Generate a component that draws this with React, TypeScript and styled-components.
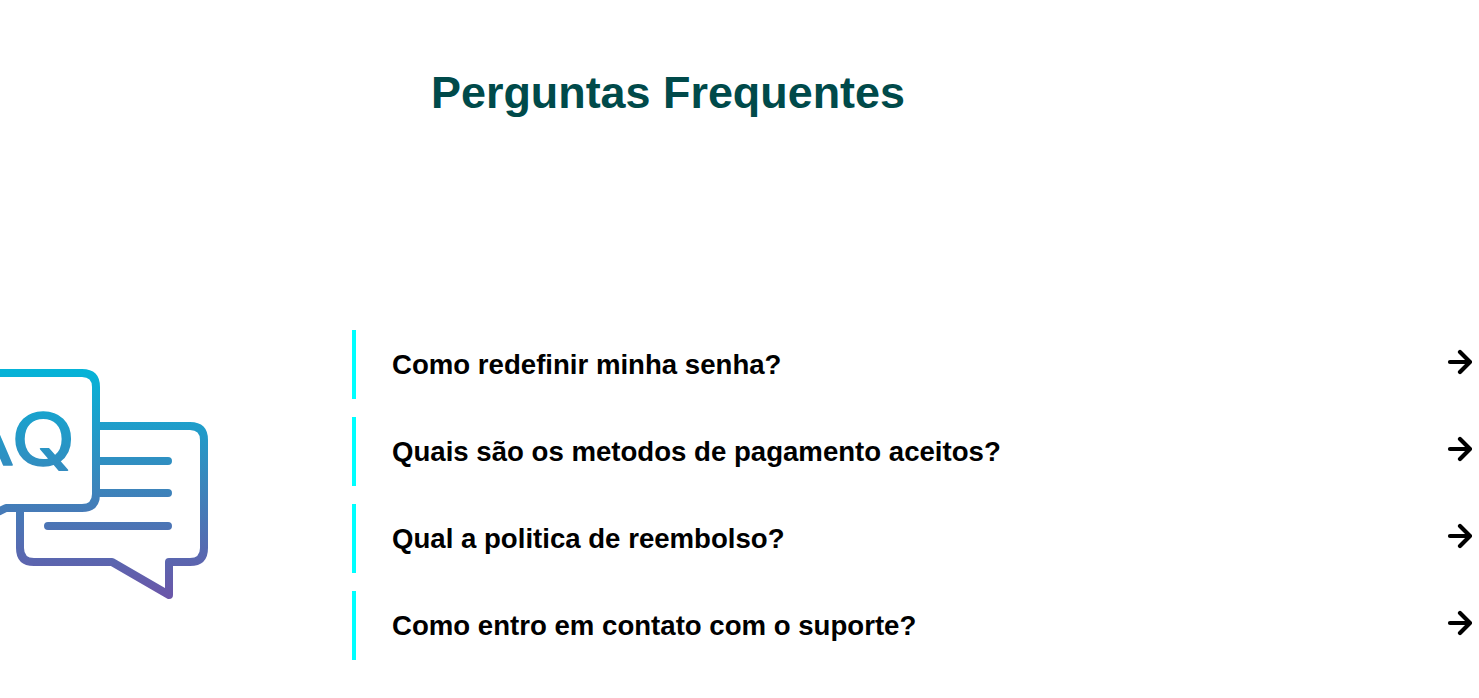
import React from 'react'
import styled, { createGlobalStyle } from 'styled-components'

const GlobalStyle = createGlobalStyle`
  html, body {
    margin: 0;
    background: #fff;
    font-family: "Liberation Sans", Arial, sans-serif;
  }
`

const Page = styled.main`
  width: 100%;
  height: 698px;
  overflow: hidden;
`

const Title = styled.h1`
  margin: 0 0 0 431px;
  padding-top: 67px;
  height: 330px;
  box-sizing: border-box;
  font-size: 44.9px;
  line-height: 52px;
  font-weight: 700;
  color: #004a4a;
`

const FaqSection = styled.section`
  display: flex;
  align-items: flex-start;
`

const Illustration = styled.div`
  flex: 0 0 352px;
  padding-top: 38px;
  line-height: 0;
`

const Questions = styled.ul`
  flex: 1;
  list-style: none;
  margin: 0;
  padding: 0;
  display: flex;
  flex-direction: column;
  gap: 18px;
`

const Question = styled.li`
  height: 69px;
  box-sizing: border-box;
  border-left: 4px solid #00ffff;
  padding: 0 7px 0 36px;
  display: flex;
  align-items: center;
  justify-content: space-between;
  color: #000;
  font-size: 27.6px;
  font-weight: 700;
`

const Arrow = styled.svg`
  flex: none;
  width: 26px;
  height: 26px;
  margin-bottom: 5px;
`

const ArrowIcon = () => (
  <Arrow viewBox="0 0 26 26" fill="none" stroke="#000" strokeWidth="4.2" strokeLinecap="round" strokeLinejoin="round">
    <path d="M4 13H23.5M14 3L24 13L14 23" />
  </Arrow>
)

const FaqIcon = () => (
  <svg width="210" height="240" viewBox="0 368 210 240" fill="none">
    <defs>
      <linearGradient id="faqGrad" gradientUnits="userSpaceOnUse" x1="0" y1="368" x2="0" y2="600">
        <stop offset="0" stopColor="#04b4d8" />
        <stop offset="0.5" stopColor="#3a86bc" />
        <stop offset="1" stopColor="#6c55a8" />
      </linearGradient>
    </defs>
    <g stroke="url(#faqGrad)" strokeWidth="8" strokeLinecap="round" strokeLinejoin="round">
      <path d="M0 373H82Q96 373 96 387V494Q96 508 82 508H6L0 511" />
      <path d="M100 426H190Q204 426 204 440V548Q204 562 190 562H169V595L112 562H34Q20 562 20 548V510" />
      <path d="M100 461H168M100 493H168M48 526H168" />
    </g>
    <text
      x="75"
      y="465"
      textAnchor="end"
      transform="translate(75 0) scale(1.16 1) translate(-75 0)"
      fontFamily="Inter, sans-serif"
      fontSize="72"
      fontWeight="400"
      fill="url(#faqGrad)"
      stroke="url(#faqGrad)"
      strokeWidth="1.6"
      strokeLinejoin="round"
    >
      FAQ
    </text>
  </svg>
)

const QUESTIONS = [
  'Como redefinir minha senha?',
  'Quais são os metodos de pagamento aceitos?',
  'Qual a politica de reembolso?',
  'Como entro em contato com o suporte?',
]

export default function App() {
  return (
    <Page>
      <GlobalStyle />
      <Title>Perguntas Frequentes</Title>
      <FaqSection>
        <Illustration>
          <FaqIcon />
        </Illustration>
        <Questions>
          {QUESTIONS.map((question) => (
            <Question key={question}>
              {question}
              <ArrowIcon />
            </Question>
          ))}
        </Questions>
      </FaqSection>
    </Page>
  )
}
